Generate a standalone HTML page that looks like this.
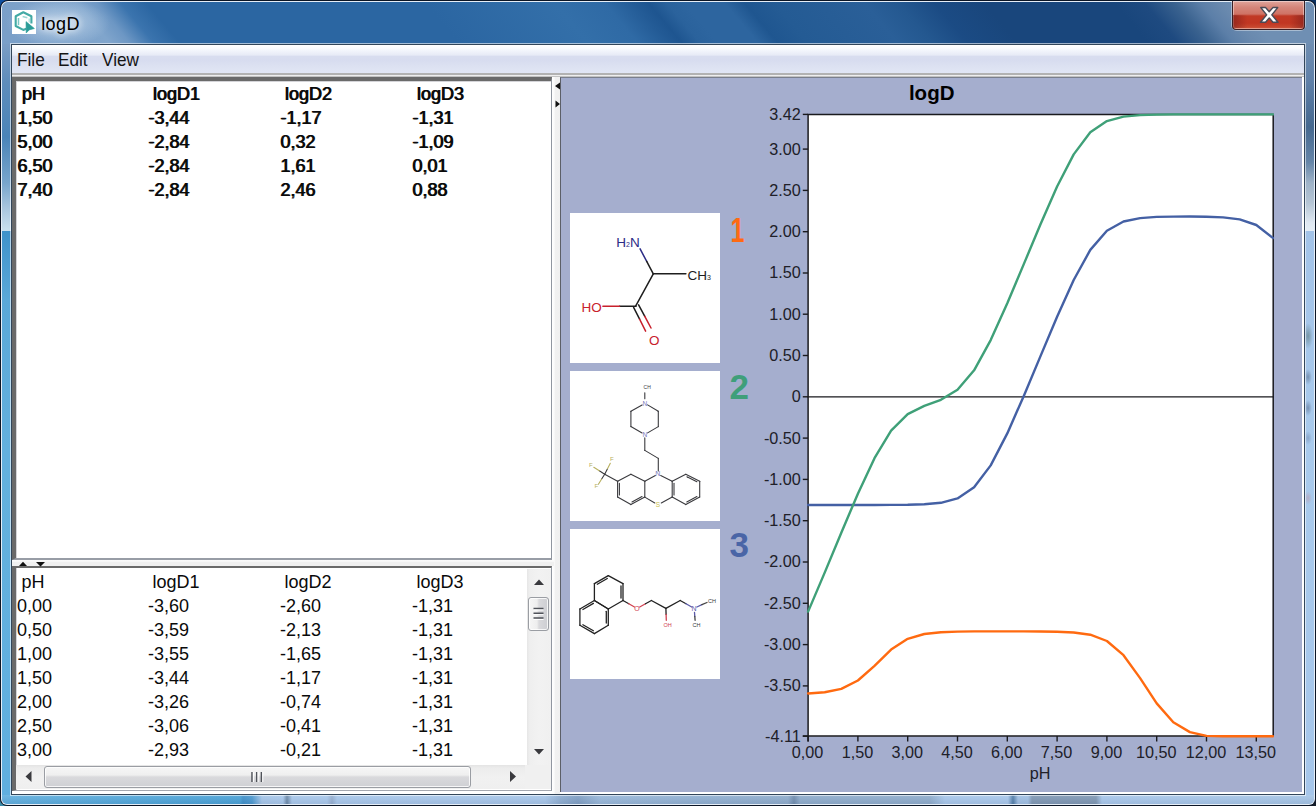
<!DOCTYPE html><html><head><meta charset="utf-8"><title>logD</title><style>
html,body{margin:0;padding:0}
body{width:1316px;height:806px;overflow:hidden;position:relative;background:#0b3f8c;font-family:"Liberation Sans",Arial,sans-serif;}
div,svg,span{position:absolute;box-sizing:border-box}
#f0{left:0;top:0;width:1316px;height:806px;border-radius:8px 8px 7px 7px;background:#0c1626}
#f1{left:1px;top:1px;width:1314px;height:804px;border-radius:7px 7px 6px 6px;background:#e6eef7}
#f2{left:0;top:0;width:1316px;height:806px;clip-path:inset(2px round 6px 6px 5px 5px);background:#a6c6e8}
#ttl{left:-60px;top:0px;width:1460px;height:44px;transform:skewX(40deg);transform-origin:0 0;background:linear-gradient(90deg,#7a9fc8 42px,#80a5cc 134px,#6d97c4 154px,#3b74ae 178px,#2b66a2 204px,#2b66a2 482px,#336fa9 612px,#2f6aa5 662px,#235b96 692px,#1e5590 706px,#2a629c 724px,#2d659f 742px,#2d659f 782px,#1f5690 802px,#245b94 832px,#2a5f98 922px,#245890 956px,#1b4b84 992px,#19467c 1042px,#19467c 1172px,#1e4a80 1202px,#3a628f 1232px,#5c7fa8 1258px,#6989ae 1278px,#6f8fb3 1296px,#6f8fb3 1442px)}
#lft{left:0px;top:44px;width:12px;height:752px;background:linear-gradient(180deg,#7a9dc5 0px,#5f8dbb 37px,#4a84b8 93px,#78a5cc 139px,#a8c5de 164px,#c8dfee 186px,#c8dfee 187px,#3e92ca 187px,#4a9bd0 216px,#5aa8d8 256px,#63b0dd 406px,#60afdf 752px)}
#rgt{left:1304px;top:44px;width:12px;height:752px;background:radial-gradient(ellipse 5px 13px at 4px 292px,rgba(80,110,110,.55) 0%,rgba(120,150,180,0) 100%),radial-gradient(ellipse 4px 8px at 4px 333px,rgba(70,90,120,.5) 0%,rgba(120,150,180,0) 100%),radial-gradient(ellipse 4px 8px at 4px 364px,rgba(70,90,125,.5) 0%,rgba(120,150,180,0) 100%),radial-gradient(ellipse 4px 7px at 4px 394px,rgba(80,100,140,.35) 0%,rgba(120,150,180,0) 100%),radial-gradient(ellipse 4px 7px at 4px 454px,rgba(200,120,130,.35) 0%,rgba(120,150,180,0) 100%),linear-gradient(180deg,#6e8db1 0px,#5f80a8 37px,#45688f 83px,#6585a8 118px,#9fb3c8 139px,#b5c5d5 159px,#dfe8f2 179px,#e4edf6 187px,#a3c3e8 187px,#a9caec 400px,#a6c6ea 752px)}
#btm{left:0px;top:795px;width:1316px;height:11px;background:linear-gradient(180deg,rgba(255,255,255,.10),rgba(0,0,30,.08)),linear-gradient(90deg,#60afdf 0px,#4fa6da 150px,#48a1d7 240px,#3d8fca 243px,#4a98d0 252px,#a5c6ea 262px,#a8c8ec 283px,#6a88a8 287px,#a8c8ec 292px,#a8c8ec 327px,#94aed0 332px,#a8c8ec 337px,#a6c6ea 545px,#8eaed2 560px,#7f9fc4 578px,#98b8da 600px,#90b0d2 700px,#8eaccc 788px,#6f8cae 794px,#8eaccc 800px,#8eaccc 930px,#a8c8ec 945px,#a8c8ec 1008px,#4f7ca8 1013px,#a0c0e4 1018px,#a0c0e4 1028px,#7f98b4 1032px,#7f98b4 1096px,#a8c8ec 1102px,#a5c5e6 1316px)}
#cedgeL{left:10px;top:43px;width:1296px;height:753px;background:rgba(255,255,255,.58)}
#cedge{left:11px;top:44px;width:1294px;height:751px;background:#33465a}
#client{left:12px;top:45px;width:1292px;height:749px;background:#fff}
#menu{left:12px;top:45px;width:1292px;height:28px;background:linear-gradient(180deg,#ffffff 0px,#fbfcfe 3px,#f1f4fb 6px,#e7ebf6 10px,#d8ddef 11.5px,#d7dcef 15px,#dde2f2 22px,#e1e6f5 28px)}
.mi{top:49px;font-size:18.5px;line-height:22px;color:#141414;white-space:pre;transform:scaleX(.93);transform-origin:0 0}
#sep1{left:12px;top:73px;width:1292px;height:4px;background:linear-gradient(180deg,#b2b2b2 0,#b2b2b2 2px,#eeeeee 2px,#eeeeee 3px,#c2c2c2 3px,#c2c2c2 4px)}
.tbl{font-size:18px;line-height:24px;color:#0a0a0a;white-space:pre;height:24px}
#top{left:12px;top:77px;width:540px;height:483px;background:#fff;border-left:4px solid #6a6a6a;border-top:4px solid #6a6a6a;border-right:1.5px solid #9096a0;border-bottom:2px solid #989da6;box-shadow:inset 1px 1px 0 #d4d4d8}
#bot{left:12px;top:566px;width:540px;height:224.5px;background:#fff;border-left:4px solid #6a6a6a;border-top:2.6px solid #6a6a6a;border-right:1.5px solid #9096a0;border-bottom:1.5px solid #a5a8b0;box-shadow:inset 1px 0 0 #d4d4d8}
#hsplit{left:12px;top:560px;width:542px;height:6px;background:linear-gradient(180deg,#fbfbfb 0,#f6f6f6 2px,#f0f0f0 2.5px,#f0f0f0 6px)}
#vsplit{left:552px;top:77px;width:8px;height:717px;background:linear-gradient(90deg,#ffffff 0,#fbfbfb 2px,#f1f1f1 3.5px,#f0f0f0 8px)}
#right{left:560px;top:77px;width:742px;height:715px;background:#a5aece;border-left:1px solid #5c5f68;border-top:1px solid #7a7f8c}
.mol{left:570px;width:150px;height:150px;background:#fff}
.num{font-weight:bold;font-size:35px;line-height:36px;height:36px}
.ax{font-size:16.2px;fill:#202028}
</style></head><body><div style="left:0;top:0;width:12px;height:12px;background:#1050a0"></div><div style="left:1304px;top:0;width:12px;height:12px;background:#0a3060"></div><div style="left:0;top:794px;width:12px;height:12px;background:#3a8aa8"></div><div style="left:1304px;top:794px;width:12px;height:12px;background:#141c28"></div><div id="f0"></div><div id="f1"></div><div id="f2"><div id="ttl"></div><div id="lft"></div><div id="rgt"></div><div id="btm"></div><div style="left:2px;top:2px;width:150px;height:42px;background:radial-gradient(ellipse 52px 24px at 56px 21px,rgba(205,222,240,.8) 0%,rgba(190,212,234,.45) 50%,rgba(160,190,222,0) 100%)"></div></div><svg style="left:12px;top:10px" width="24" height="24" viewBox="0 0 24 24"><rect width="24" height="24" fill="#fff"/>
<path d="M19.4 13.6 L19.4 6.3 L11.3 2.3 L3.7 6.3 L3.7 16 L11.3 19.9 L14.2 18.8" fill="none" stroke="#43aaa5" stroke-width="2.1" stroke-linejoin="round"/>
<path d="M6.5 8 L6.5 15.2" stroke="#7cc7c3" stroke-width="1.5" fill="none"/>
<path d="M10.6 6.5 L15.4 7.8" stroke="#9ad6d2" stroke-width="1.4" fill="none"/>
<path d="M17.2 8.6 L17.2 12.6" stroke="#a8dcd8" stroke-width="1.2" fill="none"/>
<path d="M14 11.6 L14.2 23 L17.2 19.9 L22.4 18.5 Z" fill="#2b9c98" stroke="#2b9c98" stroke-width=".6" stroke-linejoin="round"/></svg><span style="left:41.2px;top:13px;font-size:18px;letter-spacing:.4px;line-height:22px;color:#000;text-shadow:0 0 6px rgba(255,255,255,.9),0 0 10px rgba(255,255,255,.7)">logD</span><div style="left:1231px;top:1px;width:75px;height:30px;border-radius:0 0 6px 6px;background:rgba(255,255,255,.4)"></div>
<div style="left:1232px;top:1px;width:73px;height:29px;border-radius:0 0 4px 4px;border:1px solid #3d1f24;border-top:none;background:linear-gradient(180deg,#e0a59c 0px,#d5877b 6px,#cf7365 13px,#c13a25 15px,#c13622 22px,#c8482f 26px,#d66a4d 29px);box-shadow:inset 0 0 0 1px rgba(255,255,255,.4)"></div>
<div style="left:1233px;top:15px;width:71px;height:13px;background:linear-gradient(90deg,rgba(110,25,25,.5) 0,rgba(110,25,25,0) 20%,rgba(110,25,25,0) 80%,rgba(110,25,25,.5) 100%)"></div>
<svg style="left:1257.5px;top:6px" width="22.5" height="18.5" viewBox="0 0 20 18" preserveAspectRatio="none"><path d="M2.5 1.5 L6.8 1.5 L10 5.6 L13.2 1.5 L17.5 1.5 L12.3 8.6 L17.8 15.8 L13.3 15.8 L10 11.6 L6.7 15.8 L2.2 15.8 L7.7 8.6 Z" fill="#fff" stroke="#4a4a55" stroke-width="1.3" stroke-linejoin="round"/></svg><div id="cedgeL"></div><div id="cedge"></div><div id="client"></div><div id="menu"></div><span class="mi" style="left:17.3px">File</span><span class="mi" style="left:57.6px">Edit</span><span class="mi" style="left:101.7px">View</span><div id="sep1"></div><div id="vsplit"></div><div id="top"></div><div id="hsplit"></div><div id="bot"></div><div id="right"></div><svg style="left:552px;top:80px" width="9" height="32" viewBox="0 0 9 32"><path d="M3 6 L8 2.5 L8 9.5 Z M3.5 20.5 L3.5 27.5 L8 24 Z" fill="#111"/></svg><svg style="left:16px;top:560px" width="34" height="7" viewBox="0 0 34 7"><path d="M3 6 L7 1.8 L11 6 Z M20 2 L29 2 L24.5 6.5 Z" fill="#111"/></svg><span class="tbl" style="left:21.6px;top:82px;text-shadow:.9px 0 0 #0a0a0a;">pH</span><span class="tbl" style="left:152.6px;top:82px;text-shadow:.9px 0 0 #0a0a0a;">logD1</span><span class="tbl" style="left:284.6px;top:82px;text-shadow:.9px 0 0 #0a0a0a;">logD2</span><span class="tbl" style="left:416.6px;top:82px;text-shadow:.9px 0 0 #0a0a0a;">logD3</span><span class="tbl" style="left:17px;top:106px;text-shadow:.9px 0 0 #0a0a0a;">1,50</span><span class="tbl" style="left:148px;top:106px;text-shadow:.9px 0 0 #0a0a0a;">-3,44</span><span class="tbl" style="left:280px;top:106px;text-shadow:.9px 0 0 #0a0a0a;">-1,17</span><span class="tbl" style="left:412px;top:106px;text-shadow:.9px 0 0 #0a0a0a;">-1,31</span><span class="tbl" style="left:17px;top:130px;text-shadow:.9px 0 0 #0a0a0a;">5,00</span><span class="tbl" style="left:148px;top:130px;text-shadow:.9px 0 0 #0a0a0a;">-2,84</span><span class="tbl" style="left:280px;top:130px;text-shadow:.9px 0 0 #0a0a0a;">0,32</span><span class="tbl" style="left:412px;top:130px;text-shadow:.9px 0 0 #0a0a0a;">-1,09</span><span class="tbl" style="left:17px;top:154px;text-shadow:.9px 0 0 #0a0a0a;">6,50</span><span class="tbl" style="left:148px;top:154px;text-shadow:.9px 0 0 #0a0a0a;">-2,84</span><span class="tbl" style="left:280px;top:154px;text-shadow:.9px 0 0 #0a0a0a;">1,61</span><span class="tbl" style="left:412px;top:154px;text-shadow:.9px 0 0 #0a0a0a;">0,01</span><span class="tbl" style="left:17px;top:178px;text-shadow:.9px 0 0 #0a0a0a;">7,40</span><span class="tbl" style="left:148px;top:178px;text-shadow:.9px 0 0 #0a0a0a;">-2,84</span><span class="tbl" style="left:280px;top:178px;text-shadow:.9px 0 0 #0a0a0a;">2,46</span><span class="tbl" style="left:412px;top:178px;text-shadow:.9px 0 0 #0a0a0a;">0,88</span><span class="tbl" style="left:21.6px;top:570px;">pH</span><span class="tbl" style="left:152.6px;top:570px;">logD1</span><span class="tbl" style="left:284.6px;top:570px;">logD2</span><span class="tbl" style="left:416.6px;top:570px;">logD3</span><span class="tbl" style="left:17px;top:594px;">0,00</span><span class="tbl" style="left:148px;top:594px;">-3,60</span><span class="tbl" style="left:280px;top:594px;">-2,60</span><span class="tbl" style="left:412px;top:594px;">-1,31</span><span class="tbl" style="left:17px;top:618px;">0,50</span><span class="tbl" style="left:148px;top:618px;">-3,59</span><span class="tbl" style="left:280px;top:618px;">-2,13</span><span class="tbl" style="left:412px;top:618px;">-1,31</span><span class="tbl" style="left:17px;top:642px;">1,00</span><span class="tbl" style="left:148px;top:642px;">-3,55</span><span class="tbl" style="left:280px;top:642px;">-1,65</span><span class="tbl" style="left:412px;top:642px;">-1,31</span><span class="tbl" style="left:17px;top:666px;">1,50</span><span class="tbl" style="left:148px;top:666px;">-3,44</span><span class="tbl" style="left:280px;top:666px;">-1,17</span><span class="tbl" style="left:412px;top:666px;">-1,31</span><span class="tbl" style="left:17px;top:690px;">2,00</span><span class="tbl" style="left:148px;top:690px;">-3,26</span><span class="tbl" style="left:280px;top:690px;">-0,74</span><span class="tbl" style="left:412px;top:690px;">-1,31</span><span class="tbl" style="left:17px;top:714px;">2,50</span><span class="tbl" style="left:148px;top:714px;">-3,06</span><span class="tbl" style="left:280px;top:714px;">-0,41</span><span class="tbl" style="left:412px;top:714px;">-1,31</span><span class="tbl" style="left:17px;top:738px;">3,00</span><span class="tbl" style="left:148px;top:738px;">-2,93</span><span class="tbl" style="left:280px;top:738px;">-0,21</span><span class="tbl" style="left:412px;top:738px;">-1,31</span><div style="left:527px;top:569px;width:24px;height:196px;background:linear-gradient(90deg,#e6e6e6 0,#efefef 3px,#f2f2f2 12px,#f0f0f0 24px)"></div>
<div style="left:16px;top:765px;width:534.5px;height:24px;background:#f0f0f0"></div>
<div style="left:16px;top:765px;width:509px;height:24px;background:linear-gradient(180deg,#e4e4e4 0,#ececec 3px,#f1f1f1 12px,#efefef 24px)"></div>
<div style="left:528px;top:597px;width:21px;height:34px;border:1px solid #9a9da3;border-radius:3px;background:linear-gradient(90deg,#f6f6f6 0,#eeeeee 8px,#d9d9dc 10px,#cdced2 19px);box-shadow:inset 0 0 0 1px rgba(255,255,255,.8)"></div>
<svg style="left:533px;top:607px" width="12" height="14" viewBox="0 0 12 14"><path d="M0.5 1.5H10.5M0.5 6.2H10.5M0.5 11H10.5" stroke="#50535a" stroke-width="1.6"/><path d="M0.5 3H10.5M0.5 7.7H10.5M0.5 12.5H10.5" stroke="#fff" stroke-width="1"/></svg>
<div style="left:44px;top:766px;width:427px;height:22px;border:1px solid #9a9da3;border-radius:3px;background:linear-gradient(180deg,#f6f6f6 0,#efefef 8px,#d9d9dc 10px,#cfd0d4 20px);box-shadow:inset 0 0 0 1px rgba(255,255,255,.8)"></div>
<svg style="left:250px;top:771px" width="14" height="12" viewBox="0 0 14 12"><path d="M2 1V11M6.7 1V11M11.4 1V11" stroke="#50535a" stroke-width="1.5"/><path d="M3.4 1V11M8.1 1V11M12.8 1V11" stroke="#fff" stroke-width="1"/></svg>
<svg style="left:527px;top:569px" width="24" height="196" viewBox="0 0 24 196"><path d="M7 16 L12 10.5 L17 16 Z M7 180 L17 180 L12 185.5 Z" fill="#3a3a3e"/></svg>
<svg style="left:16px;top:765px" width="510" height="24" viewBox="0 0 510 24"><path d="M9.5 11.5 L15.5 6 L15.5 17 Z M494 6 L494 17 L500 11.5 Z" fill="#3a3a3e"/></svg>
<div class="mol" style="top:213px"></div><div class="mol" style="top:371px"></div><div class="mol" style="top:529px"></div><span class="num" style="left:724.5px;top:211.5px;color:#ff6a12;transform:scaleX(.72);transform-origin:100% 0">1</span><span class="num" style="left:729.5px;top:369px;color:#3f9f7a">2</span><span class="num" style="left:729.5px;top:526.5px;color:#4a65a6">3</span><svg style="left:0;top:0" width="1316" height="806" viewBox="0 0 1316 806" font-family="Liberation Sans, Arial, sans-serif" stroke-linecap="round"><line x1="640.1" y1="248.9" x2="646.7" y2="261.4" stroke="#2c2c86" stroke-width="1.5"/><line x1="646.7" y1="261.4" x2="653.3" y2="273.8" stroke="#1e1e1e" stroke-width="1.5"/><line x1="653.3" y1="273.8" x2="685.9" y2="273.8" stroke="#1e1e1e" stroke-width="1.5"/><line x1="653.3" y1="273.8" x2="635.5" y2="306.3" stroke="#1e1e1e" stroke-width="1.5"/><line x1="636.0" y1="306.3" x2="619.5" y2="306.3" stroke="#1e1e1e" stroke-width="1.5"/><line x1="619.5" y1="306.3" x2="602.9" y2="306.3" stroke="#c8202c" stroke-width="1.5"/><line x1="633.6" y1="307.4" x2="639.6" y2="319.2" stroke="#1e1e1e" stroke-width="1.5"/><line x1="639.6" y1="319.2" x2="645.6" y2="331.1" stroke="#c8202c" stroke-width="1.5"/><line x1="638.6" y1="304.8" x2="644.8" y2="316.4" stroke="#1e1e1e" stroke-width="1.5"/><line x1="644.8" y1="316.4" x2="651.0" y2="328.0" stroke="#c8202c" stroke-width="1.5"/><text x="616.3" y="247.4" font-size="13.5" fill="#2c2c86">H<tspan font-size="7" dy="0">2</tspan><tspan font-size="13.5">N</tspan></text><text x="687.6" y="280.4" font-size="13.5" fill="#1e1e1e">CH<tspan font-size="7">3</tspan></text><text x="581.6" y="312.2" font-size="13.5" fill="#c8202c">HO</text><text x="649" y="345" font-size="13.5" fill="#c8202c">O</text><line x1="644.8" y1="392.8" x2="644.8" y2="398.8" stroke="#3a3a3e" stroke-width="1.1"/><line x1="647.6" y1="404.9" x2="658.3" y2="411.3" stroke="#3a3a3e" stroke-width="1.1"/><line x1="658.3" y1="411.3" x2="658.3" y2="426.6" stroke="#3a3a3e" stroke-width="1.1"/><line x1="658.3" y1="426.6" x2="647.6" y2="432.9" stroke="#3a3a3e" stroke-width="1.1"/><line x1="642.1" y1="432.9" x2="630.9" y2="426.6" stroke="#3a3a3e" stroke-width="1.1"/><line x1="630.9" y1="426.6" x2="630.9" y2="411.3" stroke="#3a3a3e" stroke-width="1.1"/><line x1="630.9" y1="411.3" x2="642.1" y2="404.9" stroke="#3a3a3e" stroke-width="1.1"/><line x1="644.8" y1="437.9" x2="644.8" y2="450.4" stroke="#3a3a3e" stroke-width="1.1"/><line x1="644.8" y1="450.4" x2="658.3" y2="458.4" stroke="#3a3a3e" stroke-width="1.1"/><line x1="658.3" y1="458.4" x2="658.3" y2="470.9" stroke="#3a3a3e" stroke-width="1.1"/><line x1="655.4" y1="475.6" x2="644.8" y2="481.2" stroke="#3a3a3e" stroke-width="1.1"/><line x1="660.7" y1="475.6" x2="672.2" y2="481.2" stroke="#3a3a3e" stroke-width="1.1"/><line x1="644.8" y1="481.2" x2="644.8" y2="497.1" stroke="#3a3a3e" stroke-width="1.1"/><line x1="672.2" y1="481.2" x2="672.2" y2="497.1" stroke="#3a3a3e" stroke-width="1.1"/><line x1="644.8" y1="497.1" x2="654.8" y2="503.0" stroke="#3a3a3e" stroke-width="1.1"/><line x1="672.2" y1="497.1" x2="661.3" y2="503.0" stroke="#3a3a3e" stroke-width="1.1"/><line x1="644.8" y1="481.2" x2="630.9" y2="474.2" stroke="#3a3a3e" stroke-width="1.1"/><line x1="630.9" y1="474.2" x2="617.6" y2="481.2" stroke="#3a3a3e" stroke-width="1.1"/><line x1="617.6" y1="481.2" x2="617.6" y2="497.1" stroke="#3a3a3e" stroke-width="1.1"/><line x1="617.6" y1="497.1" x2="630.9" y2="504.6" stroke="#3a3a3e" stroke-width="1.1"/><line x1="630.9" y1="504.6" x2="644.8" y2="497.1" stroke="#3a3a3e" stroke-width="1.1"/><line x1="672.2" y1="481.2" x2="685.8" y2="474.2" stroke="#3a3a3e" stroke-width="1.1"/><line x1="685.8" y1="474.2" x2="699.7" y2="481.2" stroke="#3a3a3e" stroke-width="1.1"/><line x1="699.7" y1="481.2" x2="699.7" y2="497.1" stroke="#3a3a3e" stroke-width="1.1"/><line x1="699.7" y1="497.1" x2="685.8" y2="504.6" stroke="#3a3a3e" stroke-width="1.1"/><line x1="685.8" y1="504.6" x2="672.2" y2="497.1" stroke="#3a3a3e" stroke-width="1.1"/><line x1="619.4" y1="483.4" x2="619.4" y2="494.9" stroke="#3a3a3e" stroke-width="1.1"/><line x1="632.0" y1="502.0" x2="642.0" y2="496.6" stroke="#3a3a3e" stroke-width="1.1"/><line x1="674.0" y1="483.4" x2="674.0" y2="494.9" stroke="#3a3a3e" stroke-width="1.1"/><line x1="686.9" y1="476.8" x2="696.9" y2="481.8" stroke="#3a3a3e" stroke-width="1.1"/><line x1="696.9" y1="496.6" x2="686.8" y2="502.0" stroke="#3a3a3e" stroke-width="1.1"/><line x1="617.6" y1="481.2" x2="604.7" y2="474.2" stroke="#3a3a3e" stroke-width="1.1"/><line x1="604.7" y1="474.2" x2="607.5" y2="468.8" stroke="#3a3a3e" stroke-width="1.1"/><line x1="607.5" y1="468.8" x2="610.3" y2="463.3" stroke="#b8b060" stroke-width="1.1"/><line x1="604.7" y1="474.2" x2="599.3" y2="470.8" stroke="#3a3a3e" stroke-width="1.1"/><line x1="599.3" y1="470.8" x2="593.8" y2="467.3" stroke="#b8b060" stroke-width="1.1"/><line x1="604.7" y1="474.2" x2="601.5" y2="479.2" stroke="#3a3a3e" stroke-width="1.1"/><line x1="601.5" y1="479.2" x2="598.4" y2="484.2" stroke="#b8b060" stroke-width="1.1"/><text x="644.8" y="405.9" font-size="6.5" fill="#7878b8" text-anchor="middle">N</text><text x="644.8" y="436.9" font-size="6.5" fill="#7878b8" text-anchor="middle">N</text><text x="657.9" y="476.4" font-size="7" fill="#7878b8" text-anchor="middle">N</text><text x="657.9" y="507.4" font-size="6.5" fill="#c8c050" text-anchor="middle">S</text><text x="611.9" y="460.9" font-size="6" fill="#b8b060" text-anchor="middle">F</text><text x="590.8" y="466.9" font-size="6" fill="#b8b060" text-anchor="middle">F</text><text x="596.4" y="488.3" font-size="6" fill="#b8b060" text-anchor="middle">F</text><text x="647.2" y="389.2" font-size="5" fill="#3a3a3e" text-anchor="middle">CH</text><line x1="594.4" y1="583.6" x2="608.3" y2="575.6" stroke="#222" stroke-width="1.3"/><line x1="608.3" y1="575.6" x2="623.0" y2="583.6" stroke="#222" stroke-width="1.3"/><line x1="623.0" y1="583.6" x2="623.0" y2="600.5" stroke="#222" stroke-width="1.3"/><line x1="623.0" y1="600.5" x2="608.3" y2="609.0" stroke="#222" stroke-width="1.3"/><line x1="608.3" y1="609.0" x2="594.4" y2="600.5" stroke="#222" stroke-width="1.3"/><line x1="594.4" y1="600.5" x2="594.4" y2="583.6" stroke="#222" stroke-width="1.3"/><line x1="594.4" y1="600.5" x2="608.3" y2="609.0" stroke="#222" stroke-width="1.3"/><line x1="608.3" y1="609.0" x2="608.3" y2="625.3" stroke="#222" stroke-width="1.3"/><line x1="608.3" y1="625.3" x2="594.4" y2="633.6" stroke="#222" stroke-width="1.3"/><line x1="594.4" y1="633.6" x2="579.9" y2="625.3" stroke="#222" stroke-width="1.3"/><line x1="579.9" y1="625.3" x2="579.9" y2="609.0" stroke="#222" stroke-width="1.3"/><line x1="579.9" y1="609.0" x2="594.4" y2="600.5" stroke="#222" stroke-width="1.3"/><line x1="597.3" y1="584.2" x2="607.3" y2="578.5" stroke="#222" stroke-width="1.3"/><line x1="621.0" y1="585.9" x2="621.0" y2="598.1" stroke="#222" stroke-width="1.3"/><line x1="606.3" y1="611.3" x2="606.3" y2="623.0" stroke="#222" stroke-width="1.3"/><line x1="593.4" y1="630.7" x2="582.9" y2="624.7" stroke="#222" stroke-width="1.3"/><line x1="582.9" y1="609.5" x2="593.4" y2="603.4" stroke="#222" stroke-width="1.3"/><line x1="623.0" y1="600.5" x2="628.8" y2="603.7" stroke="#222" stroke-width="1.3"/><line x1="628.8" y1="603.7" x2="634.5" y2="607.0" stroke="#d04050" stroke-width="1.3"/><line x1="639.7" y1="607.0" x2="645.5" y2="603.7" stroke="#d04050" stroke-width="1.3"/><line x1="645.5" y1="603.7" x2="651.4" y2="600.5" stroke="#222" stroke-width="1.3"/><line x1="651.4" y1="600.5" x2="665.9" y2="608.4" stroke="#222" stroke-width="1.3"/><line x1="665.9" y1="608.4" x2="680.2" y2="600.5" stroke="#222" stroke-width="1.3"/><line x1="680.2" y1="600.5" x2="686.0" y2="603.7" stroke="#222" stroke-width="1.3"/><line x1="686.0" y1="603.7" x2="691.7" y2="607.0" stroke="#5a5aa8" stroke-width="1.3"/><line x1="696.9" y1="607.0" x2="701.9" y2="604.7" stroke="#5a5aa8" stroke-width="1.3"/><line x1="701.9" y1="604.7" x2="707.0" y2="602.5" stroke="#444" stroke-width="1.3"/><line x1="694.5" y1="612.4" x2="694.8" y2="616.4" stroke="#5a5aa8" stroke-width="1.3"/><line x1="694.8" y1="616.4" x2="695.1" y2="620.3" stroke="#444" stroke-width="1.3"/><line x1="665.9" y1="608.4" x2="666.1" y2="614.4" stroke="#222" stroke-width="1.3"/><line x1="666.1" y1="614.4" x2="666.3" y2="620.3" stroke="#d04050" stroke-width="1.3"/><text x="637.1" y="610.8" font-size="7" fill="#d04050" text-anchor="middle">O</text><text x="694.1" y="611.0" font-size="7" fill="#5a5aa8" text-anchor="middle">N</text><text x="667.5" y="626.9" font-size="5.5" fill="#d04050" text-anchor="middle">OH</text><text x="696.5" y="626.9" font-size="5.5" fill="#3a3a3e" text-anchor="middle">CH</text><text x="712.0" y="602.8" font-size="5.5" fill="#3a3a3e" text-anchor="middle">CH</text><rect x="808" y="114.4" width="465" height="621.8" fill="#fff"/><path d="M808.1 113.7 V741.5 M802.8 736.1 H1273.9 M808 114.4 H1273 M1273.2 113.7 V736.8" fill="none" stroke="#1a1a1e" stroke-width="1.5" stroke-linecap="butt"/><path d="M802.8 114.4 H808" stroke="#1a1a1e" stroke-width="1.4" stroke-linecap="butt"/><text class="ax" x="800.8" y="119.8" text-anchor="end">3.42</text><path d="M802.8 149.1 H808" stroke="#1a1a1e" stroke-width="1.4" stroke-linecap="butt"/><text class="ax" x="800.8" y="154.5" text-anchor="end">3.00</text><path d="M802.8 190.4 H808" stroke="#1a1a1e" stroke-width="1.4" stroke-linecap="butt"/><text class="ax" x="800.8" y="195.8" text-anchor="end">2.50</text><path d="M802.8 231.7 H808" stroke="#1a1a1e" stroke-width="1.4" stroke-linecap="butt"/><text class="ax" x="800.8" y="237.1" text-anchor="end">2.00</text><path d="M802.8 273.0 H808" stroke="#1a1a1e" stroke-width="1.4" stroke-linecap="butt"/><text class="ax" x="800.8" y="278.4" text-anchor="end">1.50</text><path d="M802.8 314.2 H808" stroke="#1a1a1e" stroke-width="1.4" stroke-linecap="butt"/><text class="ax" x="800.8" y="319.6" text-anchor="end">1.00</text><path d="M802.8 355.5 H808" stroke="#1a1a1e" stroke-width="1.4" stroke-linecap="butt"/><text class="ax" x="800.8" y="360.9" text-anchor="end">0.50</text><path d="M802.8 396.8 H808" stroke="#1a1a1e" stroke-width="1.4" stroke-linecap="butt"/><text class="ax" x="800.8" y="402.2" text-anchor="end">0</text><path d="M802.8 438.1 H808" stroke="#1a1a1e" stroke-width="1.4" stroke-linecap="butt"/><text class="ax" x="800.8" y="443.5" text-anchor="end">-0.50</text><path d="M802.8 479.4 H808" stroke="#1a1a1e" stroke-width="1.4" stroke-linecap="butt"/><text class="ax" x="800.8" y="484.8" text-anchor="end">-1.00</text><path d="M802.8 520.7 H808" stroke="#1a1a1e" stroke-width="1.4" stroke-linecap="butt"/><text class="ax" x="800.8" y="526.1" text-anchor="end">-1.50</text><path d="M802.8 562.0 H808" stroke="#1a1a1e" stroke-width="1.4" stroke-linecap="butt"/><text class="ax" x="800.8" y="567.4" text-anchor="end">-2.00</text><path d="M802.8 603.3 H808" stroke="#1a1a1e" stroke-width="1.4" stroke-linecap="butt"/><text class="ax" x="800.8" y="608.7" text-anchor="end">-2.50</text><path d="M802.8 644.6 H808" stroke="#1a1a1e" stroke-width="1.4" stroke-linecap="butt"/><text class="ax" x="800.8" y="650.0" text-anchor="end">-3.00</text><path d="M802.8 685.9 H808" stroke="#1a1a1e" stroke-width="1.4" stroke-linecap="butt"/><text class="ax" x="800.8" y="691.3" text-anchor="end">-3.50</text><path d="M802.8 736.2 H808" stroke="#1a1a1e" stroke-width="1.4" stroke-linecap="butt"/><text class="ax" x="800.8" y="741.6" text-anchor="end">-4.11</text><path d="M808.1 736 V741.5" stroke="#1a1a1e" stroke-width="1.4" stroke-linecap="butt"/><text class="ax" x="807.6" y="757.8" text-anchor="middle">0,00</text><path d="M857.9 736 V741.5" stroke="#1a1a1e" stroke-width="1.4" stroke-linecap="butt"/><text class="ax" x="857.4" y="757.8" text-anchor="middle">1,50</text><path d="M907.7 736 V741.5" stroke="#1a1a1e" stroke-width="1.4" stroke-linecap="butt"/><text class="ax" x="907.2" y="757.8" text-anchor="middle">3,00</text><path d="M957.5 736 V741.5" stroke="#1a1a1e" stroke-width="1.4" stroke-linecap="butt"/><text class="ax" x="957.0" y="757.8" text-anchor="middle">4,50</text><path d="M1007.3 736 V741.5" stroke="#1a1a1e" stroke-width="1.4" stroke-linecap="butt"/><text class="ax" x="1006.8" y="757.8" text-anchor="middle">6,00</text><path d="M1057.1 736 V741.5" stroke="#1a1a1e" stroke-width="1.4" stroke-linecap="butt"/><text class="ax" x="1056.6" y="757.8" text-anchor="middle">7,50</text><path d="M1106.9 736 V741.5" stroke="#1a1a1e" stroke-width="1.4" stroke-linecap="butt"/><text class="ax" x="1106.4" y="757.8" text-anchor="middle">9,00</text><path d="M1156.7 736 V741.5" stroke="#1a1a1e" stroke-width="1.4" stroke-linecap="butt"/><text class="ax" x="1156.2" y="757.8" text-anchor="middle">10,50</text><path d="M1206.5 736 V741.5" stroke="#1a1a1e" stroke-width="1.4" stroke-linecap="butt"/><text class="ax" x="1206.0" y="757.8" text-anchor="middle">12,00</text><path d="M1256.3 736 V741.5" stroke="#1a1a1e" stroke-width="1.4" stroke-linecap="butt"/><text class="ax" x="1255.8" y="757.8" text-anchor="middle">13,50</text><polyline points="808.1,693.5 824.7,692.3 841.3,688.9 857.9,680.5 874.5,665.8 891.1,649.6 907.7,638.8 924.3,634.0 940.9,632.2 957.5,631.6 974.1,631.4 990.7,631.4 1007.3,631.4 1023.9,631.4 1040.5,631.5 1057.1,631.7 1073.7,632.5 1090.3,634.7 1106.9,641.0 1123.5,655.2 1140.1,678.1 1156.7,703.4 1173.3,722.3 1189.9,732.1 1206.5,735.9 1223.1,736.2 1239.7,736.2 1256.3,736.2 1272.9,736.2" fill="none" stroke="#ff6a10" stroke-width="2.4" stroke-linejoin="round"/><line x1="808" y1="396.9" x2="1273" y2="396.9" stroke="#1a1a1e" stroke-width="1.4"/><polyline points="808.1,505.0 824.7,505.0 841.3,505.0 857.9,505.0 874.5,505.0 891.1,504.9 907.7,504.8 924.3,504.3 940.9,502.8 957.5,498.4 974.1,487.3 990.7,465.4 1007.3,433.4 1023.9,395.7 1040.5,356.1 1057.1,316.7 1073.7,280.0 1090.3,249.9 1106.9,230.7 1123.5,221.5 1140.1,218.1 1156.7,216.9 1173.3,216.6 1189.9,216.5 1206.5,216.7 1223.1,217.4 1239.7,219.4 1256.3,225.0 1272.9,237.9" fill="none" stroke="#4460a4" stroke-width="2.4" stroke-linejoin="round"/><polyline points="808.1,611.6 824.7,572.6 841.3,532.7 857.9,493.7 874.5,458.2 891.1,430.7 907.7,414.1 924.3,405.9 940.9,399.8 957.5,389.8 974.1,370.3 990.7,340.1 1007.3,303.3 1023.9,263.9 1040.5,224.2 1057.1,186.5 1073.7,154.4 1090.3,132.3 1106.9,121.1 1123.5,116.6 1140.1,115.1 1156.7,114.6 1173.3,114.4 1189.9,114.4 1206.5,114.4 1223.1,114.4 1239.7,114.4 1256.3,114.4 1272.9,114.4" fill="none" stroke="#3fa078" stroke-width="2.4" stroke-linejoin="round"/><text class="ax" x="1040" y="778.8" text-anchor="middle">pH</text><text x="931.7" y="100.2" text-anchor="middle" font-size="20.5" font-weight="bold" fill="#000">logD</text></svg></body></html>
